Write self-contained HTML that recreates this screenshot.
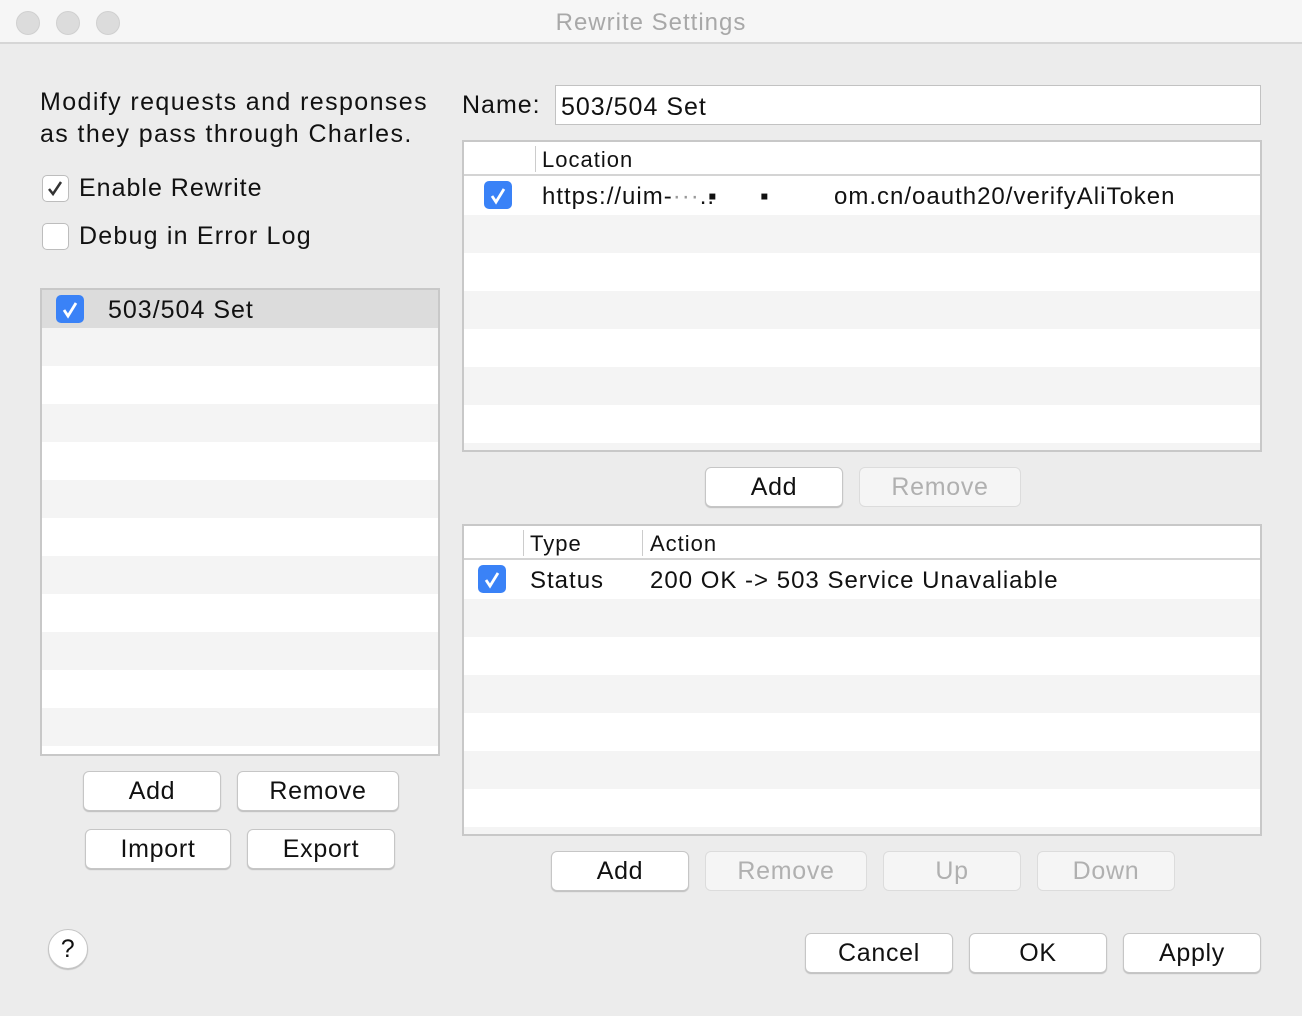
<!DOCTYPE html>
<html><head><meta charset="utf-8"><style>
*{box-sizing:border-box;margin:0;padding:0}
body{width:1302px;height:1016px;background:#ececec;font-family:"Liberation Sans",sans-serif;color:#111;position:relative;overflow:hidden;font-size:24px;letter-spacing:0.7px}
.a{position:absolute;white-space:nowrap}
.title{left:0;top:0;width:1302px;height:44px;background:#f6f6f6;border-bottom:2px solid #d6d6d6}
.dot{position:absolute;top:11px;width:24px;height:24px;border-radius:50%;background:#dcdcdc;border:1px solid #d0d0d0}
.btn{position:absolute;height:40px;background:#fff;border:1px solid #c6c6c6;border-radius:6px;box-shadow:0 1px 1px rgba(0,0,0,.2);text-align:center;line-height:38px;font-size:25px}
.dis{background:#f5f5f5;color:#b0b0b0;box-shadow:none;border-color:#dcdcdc}
.cb{position:absolute;width:27px;height:27px;border-radius:5px;background:#fff;border:1px solid #bdbdbd}
.cbb{position:absolute;width:28px;height:28px;border-radius:5px;background:#3a82f7}
.stripe{background:repeating-linear-gradient(#f4f4f4 0 38px,#fff 38px 76px)}
.stripe2{background:repeating-linear-gradient(#fff 0 38px,#f4f4f4 38px 76px)}
</style></head><body>
<div class="a title"></div>
<div class="dot" style="left:16px"></div><div class="dot" style="left:56px"></div><div class="dot" style="left:96px"></div>
<div class="a" style="left:0;width:1302px;top:9px;text-align:center;color:#a8a8a8;font-size:24px;letter-spacing:1px">Rewrite Settings</div>

<div class="a" style="left:40px;top:86px;line-height:32px;font-size:25px;letter-spacing:1.4px">Modify requests and responses<br>as they pass through Charles.</div>
<div class="cb" style="left:42px;top:175px"></div>
<svg class="a" style="left:42px;top:175px" width="27" height="27"><path d="M7 14l4 5 8-12" stroke="#333" stroke-width="2.5" fill="none"/></svg>
<div class="a" style="left:79px;top:174px;font-size:25px;letter-spacing:1px">Enable Rewrite</div>
<div class="cb" style="left:42px;top:223px"></div>
<div class="a" style="left:79px;top:222px;font-size:25px;letter-spacing:1.2px">Debug in Error Log</div>

<div class="a stripe" style="left:40px;top:288px;width:400px;height:468px;border:2px solid #c8c8c8;background-position:0 38px"></div>
<div class="a" style="left:42px;top:290px;width:396px;height:38px;background:#dcdcdc"></div>
<div class="cbb" style="left:56px;top:295px"></div>
<svg class="a" style="left:56px;top:295px" width="28" height="28"><path d="M8 15l4 6 8-13" stroke="#fff" stroke-width="2.8" fill="none"/></svg>
<div class="a" style="left:108px;top:296px;font-size:25px;letter-spacing:1px">503/504 Set</div>

<div class="btn" style="left:83px;top:771px;width:138px">Add</div>
<div class="btn" style="left:237px;top:771px;width:162px">Remove</div>
<div class="btn" style="left:85px;top:829px;width:146px">Import</div>
<div class="btn" style="left:247px;top:829px;width:148px">Export</div>
<div class="a" style="left:48px;top:929px;width:40px;height:40px;border-radius:50%;background:#fff;border:1px solid #c6c6c6;text-align:center;line-height:38px;font-size:25px;box-shadow:0 1px 1px rgba(0,0,0,.2)">?</div>

<div class="a" style="left:462px;top:91px;font-size:25px;letter-spacing:1px">Name:</div>
<div class="a" style="left:555px;top:85px;width:706px;height:40px;background:#fff;border:1px solid #c2c2c2;padding-left:5px;line-height:42px;font-size:25px;letter-spacing:1px">503/504 Set</div>

<div class="a" style="left:462px;top:140px;width:800px;height:312px;border:2px solid #c8c8c8;background:#fff;overflow:hidden">
 <div class="a" style="left:0;top:0;width:796px;height:34px;border-bottom:2px solid #d4d4d4;background:#fff"></div>
 <div class="a" style="left:71px;top:4px;height:26px;border-left:1px solid #ccc"></div>
 <div class="a" style="left:78px;top:5px;font-size:22px;letter-spacing:1px">Location</div>
 <div class="a stripe2" style="left:0;top:35px;width:796px;height:273px"></div>
 <div class="cbb" style="left:20px;top:39px"></div>
 <svg class="a" style="left:20px;top:39px" width="28" height="28"><path d="M8 15l4 6 8-13" stroke="#fff" stroke-width="2.8" fill="none"/></svg>
 <div class="a" style="left:78px;top:41px;font-size:24px;letter-spacing:1px">https://uim-<span style="color:#999">···</span>..</div>
 <div class="a" style="left:296px;top:41px;font-size:24px;">▪</div>
 <div class="a" style="left:244px;top:41px;font-size:24px;">▪</div>
 <div class="a" style="left:370px;top:41px;font-size:24px;letter-spacing:1px">om.cn/oauth20/verifyAliToken</div>
</div>
<div class="btn" style="left:705px;top:467px;width:138px">Add</div>
<div class="btn dis" style="left:859px;top:467px;width:162px">Remove</div>

<div class="a" style="left:462px;top:524px;width:800px;height:312px;border:2px solid #c8c8c8;background:#fff;overflow:hidden">
 <div class="a" style="left:0;top:0;width:796px;height:34px;border-bottom:2px solid #d4d4d4;background:#fff"></div>
 <div class="a" style="left:59px;top:4px;height:26px;border-left:1px solid #ccc"></div>
 <div class="a" style="left:178px;top:4px;height:26px;border-left:1px solid #ccc"></div>
 <div class="a" style="left:66px;top:5px;font-size:22px;letter-spacing:1px">Type</div>
 <div class="a" style="left:186px;top:5px;font-size:22px;letter-spacing:1px">Action</div>
 <div class="a stripe2" style="left:0;top:35px;width:796px;height:273px"></div>
 <div class="cbb" style="left:14px;top:39px"></div>
 <svg class="a" style="left:14px;top:39px" width="28" height="28"><path d="M8 15l4 6 8-13" stroke="#fff" stroke-width="2.8" fill="none"/></svg>
 <div class="a" style="left:66px;top:41px;letter-spacing:1px">Status</div>
 <div class="a" style="left:186px;top:41px;letter-spacing:1px">200 OK -&gt; 503 Service Unavaliable</div>
</div>
<div class="btn" style="left:551px;top:851px;width:138px">Add</div>
<div class="btn dis" style="left:705px;top:851px;width:162px">Remove</div>
<div class="btn dis" style="left:883px;top:851px;width:138px">Up</div>
<div class="btn dis" style="left:1037px;top:851px;width:138px">Down</div>

<div class="btn" style="left:805px;top:933px;width:148px">Cancel</div>
<div class="btn" style="left:969px;top:933px;width:138px">OK</div>
<div class="btn" style="left:1123px;top:933px;width:138px">Apply</div>
</body></html>
